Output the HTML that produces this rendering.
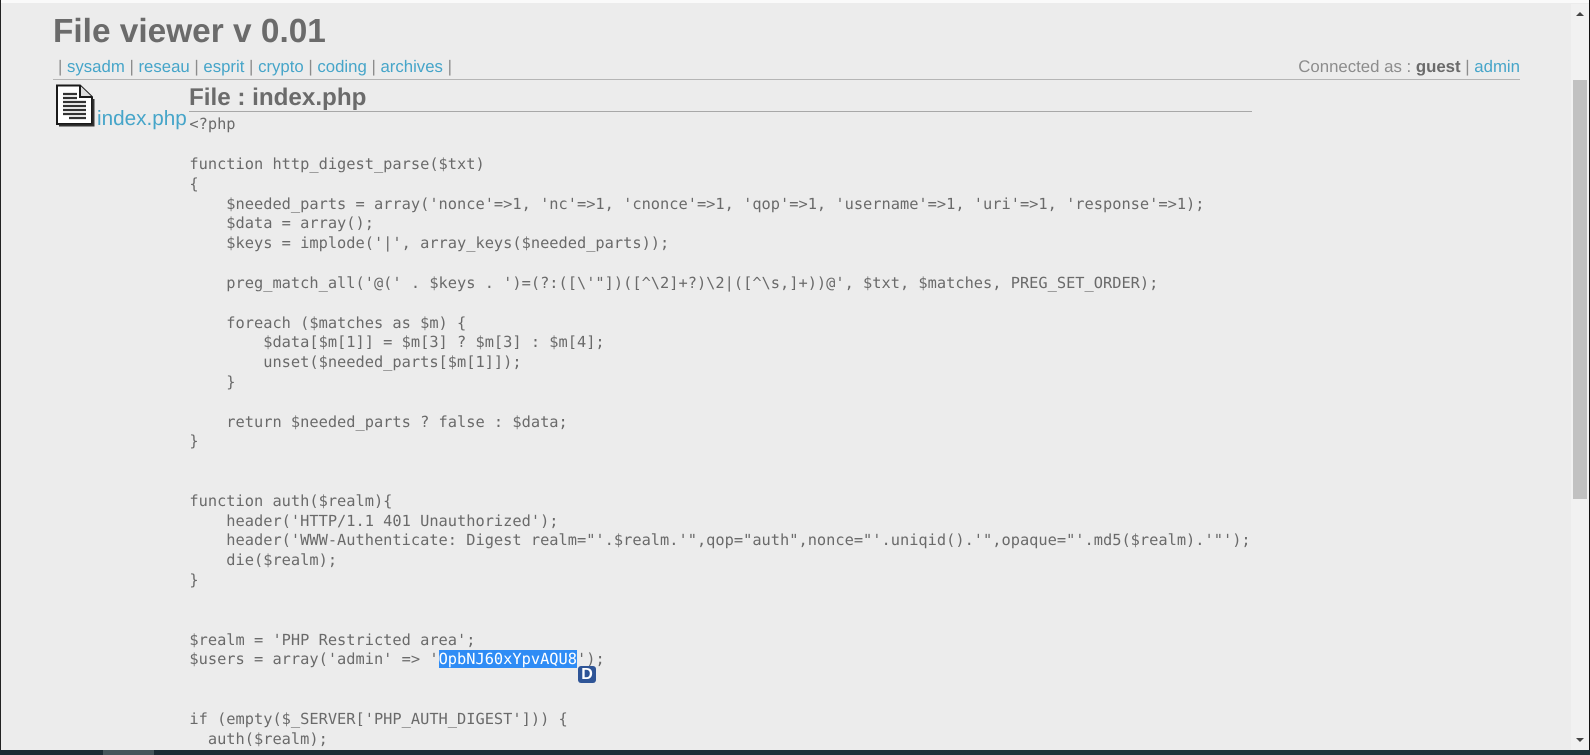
<!DOCTYPE html>
<html><head><meta charset="utf-8"><title>File viewer</title>
<style>
html,body{margin:0;padding:0;width:1590px;height:755px;overflow:hidden;background:#ececec}
body{position:relative;font-family:"Liberation Sans",sans-serif;color:#6b6b6b;text-rendering:geometricPrecision}
#w{position:absolute;left:0;top:0;width:1590px;height:755px;filter:blur(.35px)}
.a{position:absolute;white-space:pre}
a{color:#46a5c9;text-decoration:none}
#code{position:absolute;left:189.4px;top:115.4px;margin:0;font:15.33px/19.82px "DejaVu Sans Mono",monospace;color:#6a6a6a;white-space:pre}
#code span{background:#2f8cf5;color:#fff}
</style></head><body><div id="w">
<div class="a" style="left:0;top:0;width:1590px;height:3px;background:#fafafa"></div>
<div class="a" style="left:0;top:0;width:1px;height:750px;background:#222"></div>
<div class="a" style="left:1589px;top:0;width:1px;height:750px;background:#111"></div>
<div class="a" style="left:1571px;top:4px;width:18px;height:746px;background:#f1f1f1"></div>
<div class="a" style="left:1573px;top:80px;width:14px;height:419px;background:#c1c1c1"></div>
<svg class="a" style="left:1573px;top:10px" width="14" height="8"><path d="M7 2L11 6H3Z" fill="#444"/></svg>
<svg class="a" style="left:1573px;top:736px" width="14" height="8"><path d="M3 2H11L7 6Z" fill="#444"/></svg>
<div class="a" style="left:53px;top:13px;font-size:33.4px;font-weight:bold;line-height:38px;color:#6b6b6b">File viewer v 0.01</div>
<div class="a" style="left:58px;top:57px;font-size:16.77px;line-height:19px;color:#8c8c8c">| <a>sysadm</a> | <a>reseau</a> | <a>esprit</a> | <a>crypto</a> | <a>coding</a> | <a>archives</a> |</div>
<div class="a" style="right:70px;top:57px;font-size:16.8px;line-height:19px;color:#8c8c8c">Connected as : <b style="color:#6b6b6b">guest</b> | <a>admin</a></div>
<div class="a" style="left:53px;top:79px;width:1467px;height:1px;background:#b5b5b5"></div>
<svg class="a" style="left:55px;top:84px" width="40" height="44" viewBox="0 0 40 44"><path d="M2 1.5H25L37 13V40H2Z" fill="#fff" stroke="#1a1a1a" stroke-width="2"/><path d="M25 1.5V13H37" fill="#ddd" stroke="#1a1a1a" stroke-width="2"/><path d="M4 41.5H38.5V15" fill="none" stroke="#333" stroke-width="2"/><path d="M8 10H22M8 14H22M8 18H31M8 22H31M8 26H31M8 30H31M14 34H31" stroke="#333" stroke-width="2.2"/></svg>
<a class="a" style="left:97px;top:107px;font-size:20.7px;line-height:24px">index.php</a>
<div class="a" style="left:189px;top:84px;font-size:24.2px;font-weight:bold;line-height:28px;color:#6b6b6b">File : index.php</div>
<div class="a" style="left:189px;top:111px;width:1063px;height:1px;background:#a8a8a8"></div>
<pre id="code">&lt;?php

function http_digest_parse($txt)
{
    $needed_parts = array('nonce'=&gt;1, 'nc'=&gt;1, 'cnonce'=&gt;1, 'qop'=&gt;1, 'username'=&gt;1, 'uri'=&gt;1, 'response'=&gt;1);
    $data = array();
    $keys = implode('|', array_keys($needed_parts));

    preg_match_all('@(' . $keys . ')=(?:([\'"])([^\2]+?)\2|([^\s,]+))@', $txt, $matches, PREG_SET_ORDER);

    foreach ($matches as $m) {
        $data[$m[1]] = $m[3] ? $m[3] : $m[4];
        unset($needed_parts[$m[1]]);
    }

    return $needed_parts ? false : $data;
}


function auth($realm){
    header('HTTP/1.1 401 Unauthorized');
    header('WWW-Authenticate: Digest realm="'.$realm.'",qop="auth",nonce="'.uniqid().'",opaque="'.md5($realm).'"');
    die($realm);
}


$realm = 'PHP Restricted area';
$users = array('admin' =&gt; '<span>OpbNJ60xYpvAQU8</span>');


if (empty($_SERVER['PHP_AUTH_DIGEST'])) {
  auth($realm);
</pre>
<div class="a" style="left:578px;top:666px;width:18px;height:17px;background:#2f5597;border-radius:3px;color:#fff;font-size:16px;font-weight:bold;line-height:17px;text-align:center">D</div>
<div class="a" style="left:0;top:750px;width:1590px;height:5px;background:linear-gradient(90deg,#1b2b33,#1d3138 50%,#1f333a)"></div>
<div class="a" style="left:103px;top:750px;width:51px;height:5px;background:#46565b"></div>
</div></body></html>
